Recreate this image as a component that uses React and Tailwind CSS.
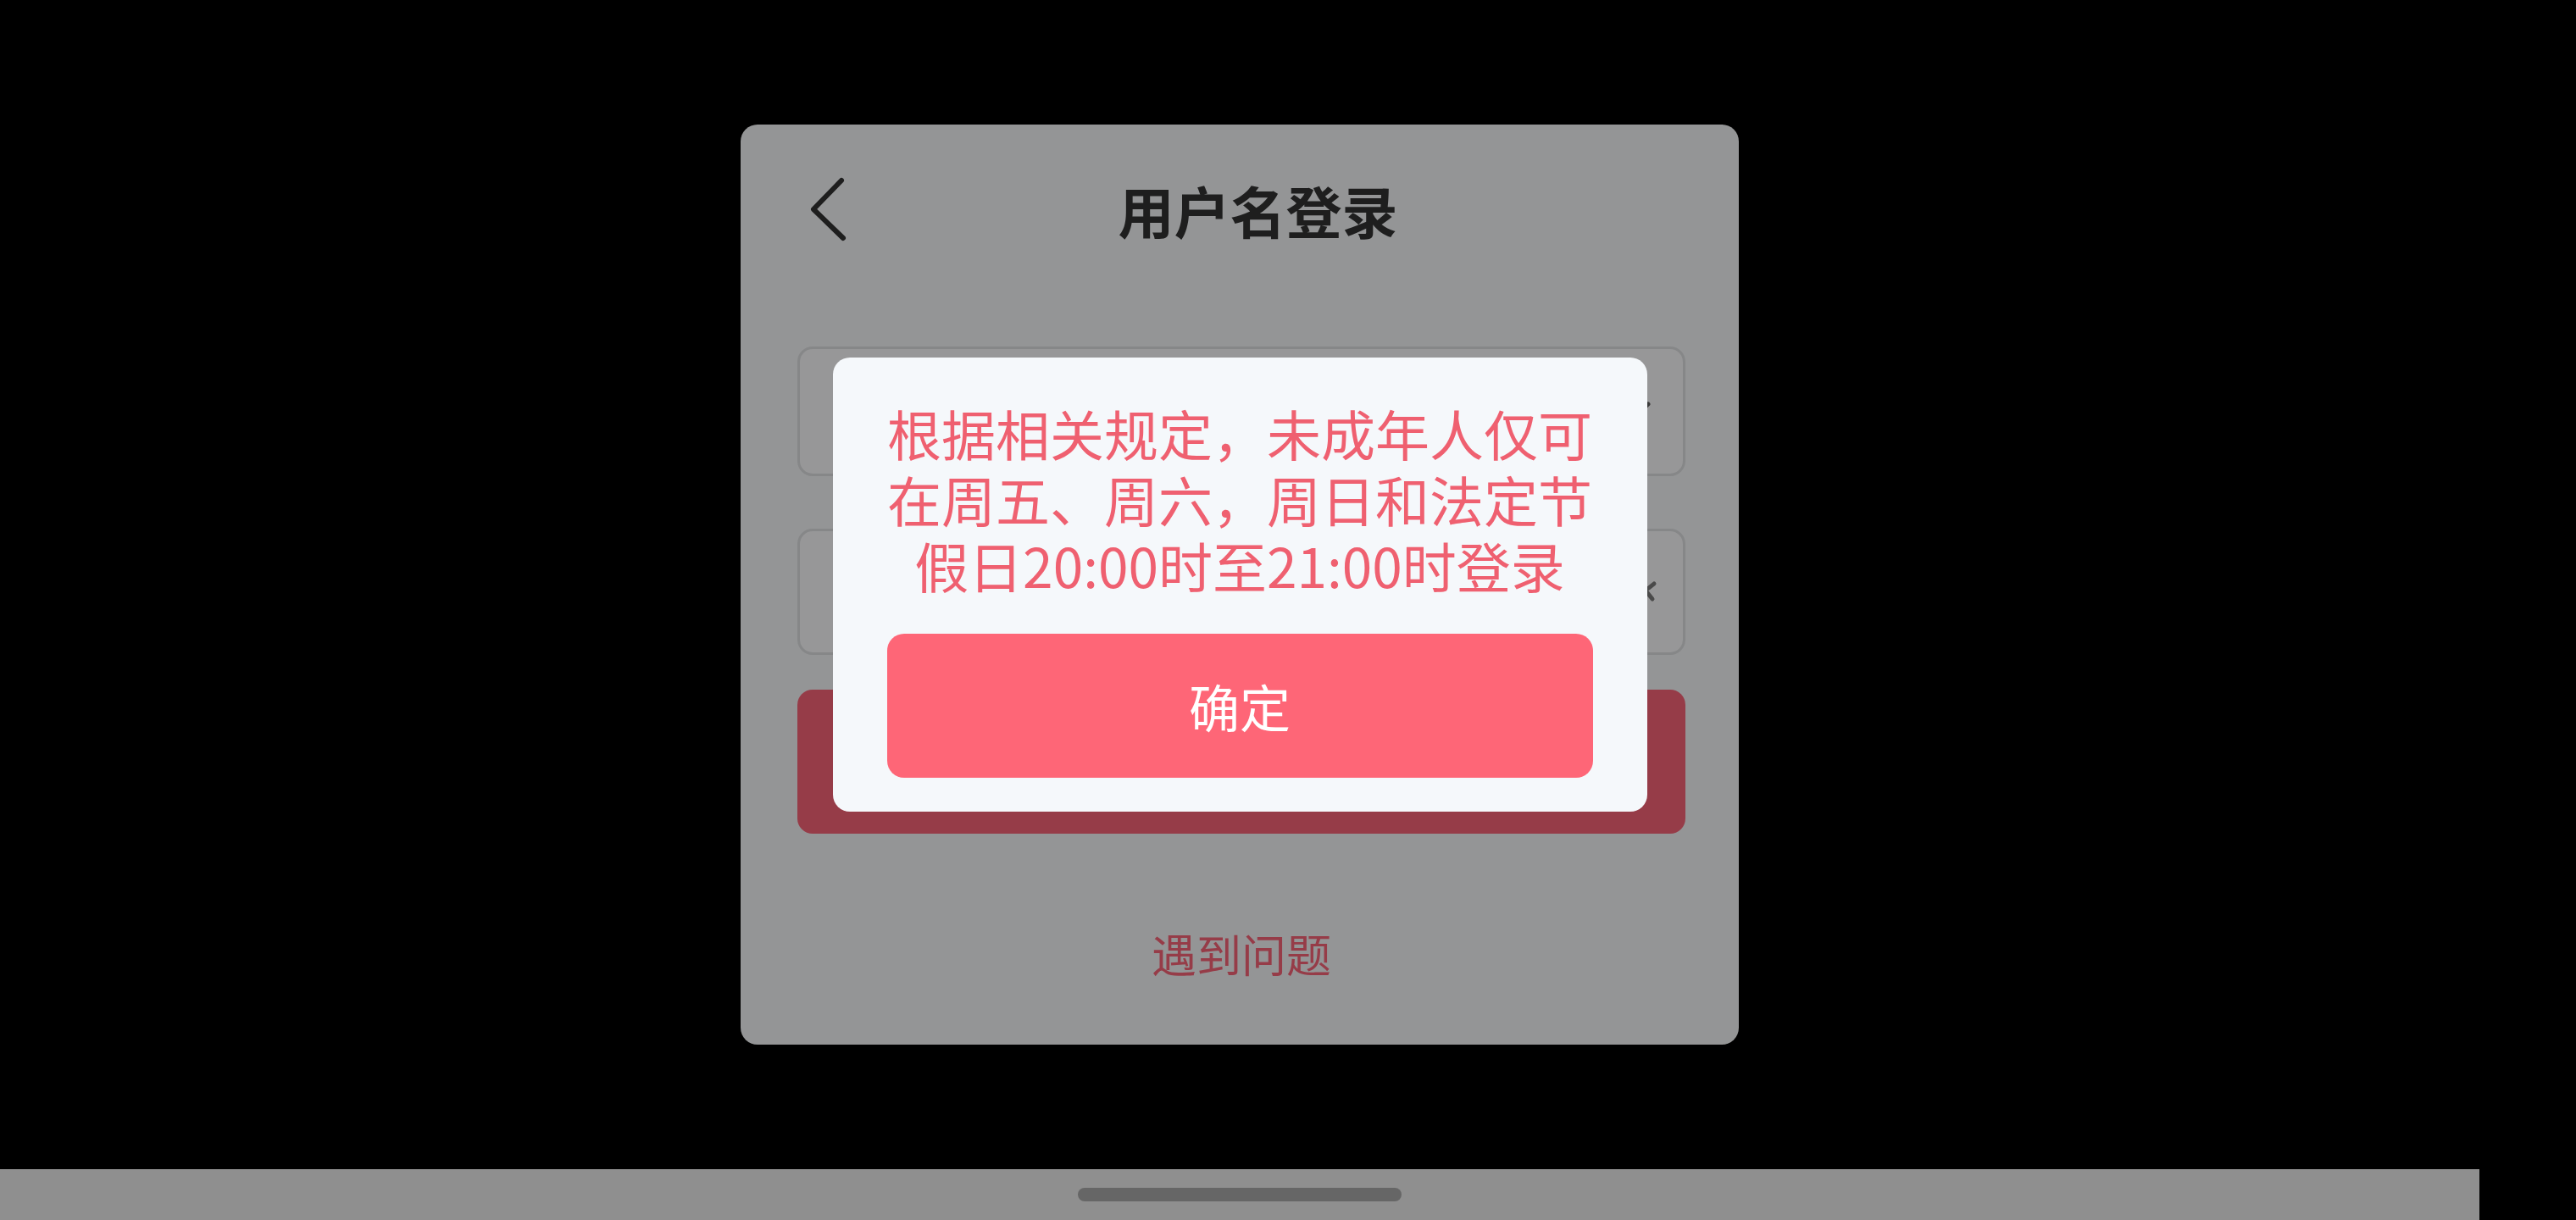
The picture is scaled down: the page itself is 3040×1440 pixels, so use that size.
import React from "react";

const cjk = { fontFamily: '"Noto Sans CJK SC", "Noto Sans", sans-serif' };

const BackIcon = () => (
  <svg width="43" height="84" viewBox="0 0 43 84" fill="none">
    <path d="M37 8 L4 42 L39 76" stroke="#1e1e1e" strokeWidth="6" strokeLinecap="round" strokeLinejoin="round" />
  </svg>
);

const ChevronDown = () => (
  <svg width="44" height="26" viewBox="0 0 44 26" fill="none">
    <path d="M3 4 L22 22 L41 4" stroke="#3a3a3a" strokeWidth="5" strokeLinecap="round" strokeLinejoin="round" />
  </svg>
);

const EyeClosed = () => (
  <svg width="56" height="44" viewBox="0 0 56 44" fill="none">
    <path d="M4 12 Q28 34 52 12" stroke="#4a4a4a" strokeWidth="5" strokeLinecap="round" />
    <path d="M28 24 L28 34 M14 20 L8 28 M42 20 L50 30" stroke="#4a4a4a" strokeWidth="5" strokeLinecap="round" />
  </svg>
);

const LoginCard = () => (
  <div className="w-[1178px] h-[1086px] rounded-[20px] bg-[#949596] flex flex-col" style={cjk}>
    {/* header */}
    <div className="h-[200px] flex items-center px-[82px]">
      <BackIcon />
      <div className="flex-1 text-center text-[66px] leading-none font-bold text-[#1e1e1e]">用户名登录</div>
    </div>

    {/* form */}
    <div className="flex flex-col pl-[67px] pr-[63px] mt-[62px]">
      <div className="h-[153px] rounded-[18px] border-[3px] border-[#868788] bg-[#979798] flex items-center justify-end pr-[38px]">
        <ChevronDown />
      </div>
      <div className="h-[149px] mt-[62px] rounded-[18px] border-[3px] border-[#868788] bg-[#979798] flex items-center justify-end pr-[30px]">
        <EyeClosed />
      </div>
      <div className="h-[170px] mt-[41px] rounded-[18px] bg-[#963c48]" />
      <div className="mt-[111px] text-center text-[53px] leading-[60px] text-[#963c48]">遇到问题</div>
    </div>
  </div>
);

const AgeDialog = () => (
  <div className="w-[961px] rounded-[20px] bg-[#f5f8fb] pt-[49px] pb-[40px] px-[64px] flex flex-col" style={cjk}>
    <div className="flex flex-col items-center text-[64px] leading-[78px] text-[#ef6070] whitespace-nowrap">
      <span>根据相关规定，未成年人仅可</span>
      <span>在周五、周六，周日和法定节</span>
      <span>假日20:00时至21:00时登录</span>
    </div>
    <button className="mt-[43px] h-[170px] rounded-[20px] bg-[#fe6677] text-white text-[60px] leading-none">
      确定
    </button>
  </div>
);

export default function App() {
  return (
    <div className="w-[3040px] h-[1440px] bg-black flex overflow-hidden">
      <div className="w-[2926px] flex flex-col">
        <div className="flex-1 relative flex items-center justify-center">
          <LoginCard />
          {/* modal overlay */}
          <div className="absolute inset-0 flex items-center justify-center">
            <AgeDialog />
          </div>
        </div>
        {/* gesture bar */}
        <div className="h-[60px] bg-[#8f8f8f] flex items-center justify-center">
          <div className="w-[382px] h-[16px] rounded-full bg-[#666666]" />
        </div>
      </div>
    </div>
  );
}
